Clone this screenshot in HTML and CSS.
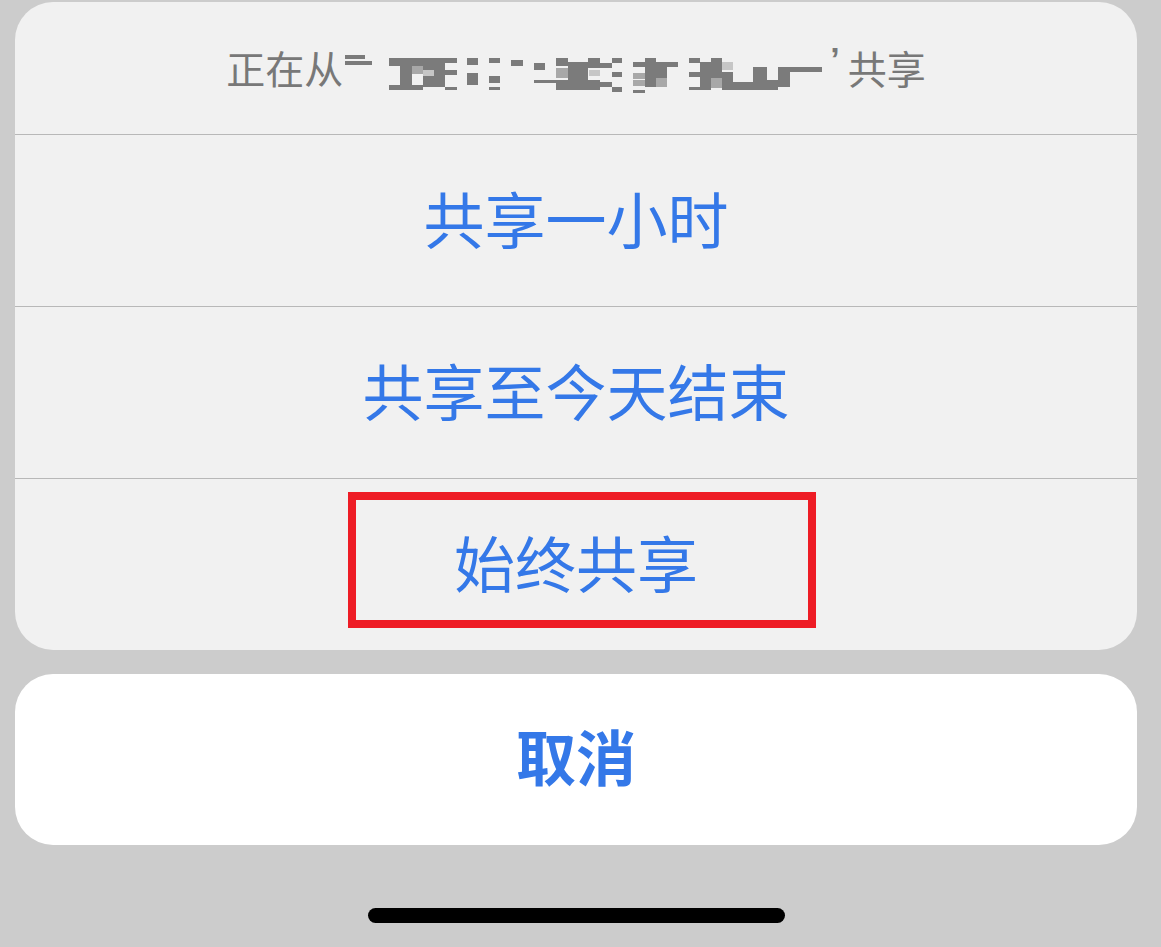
FILE: index.html
```html
<!DOCTYPE html>
<html lang="zh-CN">
<head>
<meta charset="utf-8">
<title>共享</title>
<link rel="stylesheet" href="styles.css">
</head>
<body>
<div class="screen">
  <div class="sheet">
    <div class="header">
      <span class="htext">正在从</span>
      <svg class="mosaic" viewBox="343 40 482 56" width="482" height="56" aria-hidden="true">
        <g fill="#7b7b7b">
          <rect x="345" y="55" width="20" height="4"/>
          <rect x="345" y="61" width="27" height="4"/>
          <rect x="389" y="58" width="44" height="8"/>
          <rect x="400" y="66" width="12" height="21"/>
          <rect x="389" y="85" width="34" height="5"/>
          <rect x="423" y="58" width="22" height="29"/>
          <rect x="445" y="58" width="12" height="5"/>
          <rect x="445" y="70" width="12" height="5"/>
          <rect x="445" y="87" width="12" height="3"/>
          <rect x="467" y="58" width="11" height="7"/>
          <rect x="467" y="73" width="11" height="12"/>
          <rect x="489" y="58" width="11" height="5"/>
          <rect x="489" y="76" width="11" height="7"/>
          <rect x="489" y="87" width="11" height="3"/>
          <rect x="511" y="60" width="12" height="6"/>
          <rect x="534" y="63" width="11" height="7"/>
          <rect x="534" y="80" width="23" height="3"/>
          <rect x="556" y="58" width="12" height="8"/>
          <rect x="568" y="62" width="20" height="28"/>
          <rect x="556" y="80" width="12" height="10"/>
          <rect x="588" y="58" width="12" height="10"/>
          <rect x="588" y="80" width="12" height="10"/>
          <rect x="600" y="63" width="12" height="5"/>
          <rect x="600" y="82" width="12" height="5"/>
          <rect x="612" y="58" width="10" height="5"/>
          <rect x="612" y="72" width="10" height="5"/>
          <rect x="612" y="87" width="10" height="5"/>
          <rect x="633" y="62" width="12" height="5"/>
          <rect x="633" y="90" width="12" height="3"/>
          <rect x="645" y="58" width="11" height="29"/>
          <rect x="656" y="62" width="11" height="16"/>
          <rect x="667" y="62" width="11" height="5"/>
          <rect x="689" y="58" width="11" height="5"/>
          <rect x="689" y="72" width="11" height="5"/>
          <rect x="689" y="87" width="11" height="3"/>
          <rect x="700" y="62" width="11" height="28"/>
          <rect x="711" y="58" width="11" height="20"/>
          <rect x="722" y="72" width="11" height="18"/>
          <rect x="733" y="82" width="20" height="8"/>
          <rect x="753" y="67" width="14" height="23"/>
          <rect x="767" y="80" width="11" height="10"/>
          <rect x="778" y="67" width="12" height="20"/>
          <rect x="790" y="67" width="32" height="5"/>
        </g>
        <g fill="#a8a8a8">
          <rect x="412" y="66" width="11" height="8"/>
          <rect x="556" y="68" width="12" height="10"/>
          <rect x="633" y="73" width="12" height="6"/>
          <rect x="656" y="78" width="11" height="9"/>
          <rect x="711" y="78" width="11" height="10"/>
          <rect x="633" y="80" width="12" height="6"/>
        </g>
        <g fill="#c6c6c6">
          <rect x="423" y="70" width="11" height="6"/>
          <rect x="722" y="62" width="11" height="8"/>
          <rect x="589" y="70" width="11" height="6"/>
        </g>
      </svg>
      <span class="quote">’</span><span class="htext">共享</span>
    </div>
    <div class="row"><span class="label">共享一小时</span></div>
    <div class="row"><span class="label">共享至今天结束</span></div>
    <div class="row highlighted"><span class="label">始终共享</span><span class="redbox"></span></div>
  </div>
  <div class="cancel"><span class="label bold">取消</span></div>
  <div class="homebar-wrap"><div class="homebar"></div></div>
</div>
</body>
</html>
```
FILE: styles.css
```css
html, body {
  margin: 0;
  padding: 0;
  background: #cccccc;
  width: 1161px;
  height: 947px;
  overflow: hidden;
  font-family: "Noto Sans CJK SC", "Noto Sans", sans-serif;
}

.screen {
  width: 1161px;
  height: 947px;
  padding: 2px 24px 0 15px;
  box-sizing: border-box;
  display: flex;
  flex-direction: column;
}

.sheet {
  background: #f1f1f1;
  border-radius: 38px;
  overflow: hidden;
  display: flex;
  flex-direction: column;
}

.header {
  height: 132px;
  display: flex;
  align-items: center;
  justify-content: center;
  color: #787878;
  font-size: 39px;
  padding-bottom: 2px;
  box-sizing: border-box;
}

.htext {
  line-height: 1;
}

.mosaic {
  display: block;
  flex: none;
  margin-top: 2px;
}

.quote {
  font-family: "Liberation Sans", sans-serif;
  font-weight: 700;
  font-size: 34px;
  line-height: 1;
  margin: -16px 8px 0 5px;
}

.row {
  height: 171px;
  border-top: 1px solid #b8b8b8;
  display: flex;
  align-items: center;
  justify-content: center;
  position: relative;
  box-sizing: content-box;
}

.row .label {
  margin-top: -6px;
  font-size: 61px;
}

.label {
  color: #3478e8;
  font-size: 60px;
  line-height: 1;
}

.bold {
  font-weight: 700;
  margin-top: -10px;
}

.redbox {
  position: absolute;
  left: 333px;
  top: 13px;
  width: 452px;
  height: 120px;
  border: 8px solid #ee1c25;
}

.cancel {
  margin-top: 24px;
  height: 171px;
  background: #ffffff;
  border-radius: 38px;
  display: flex;
  align-items: center;
  justify-content: center;
}

.homebar-wrap {
  display: flex;
  justify-content: center;
  padding-top: 63px;
}

.homebar {
  width: 417px;
  height: 15px;
  border-radius: 8px;
  background: #000000;
}
```
